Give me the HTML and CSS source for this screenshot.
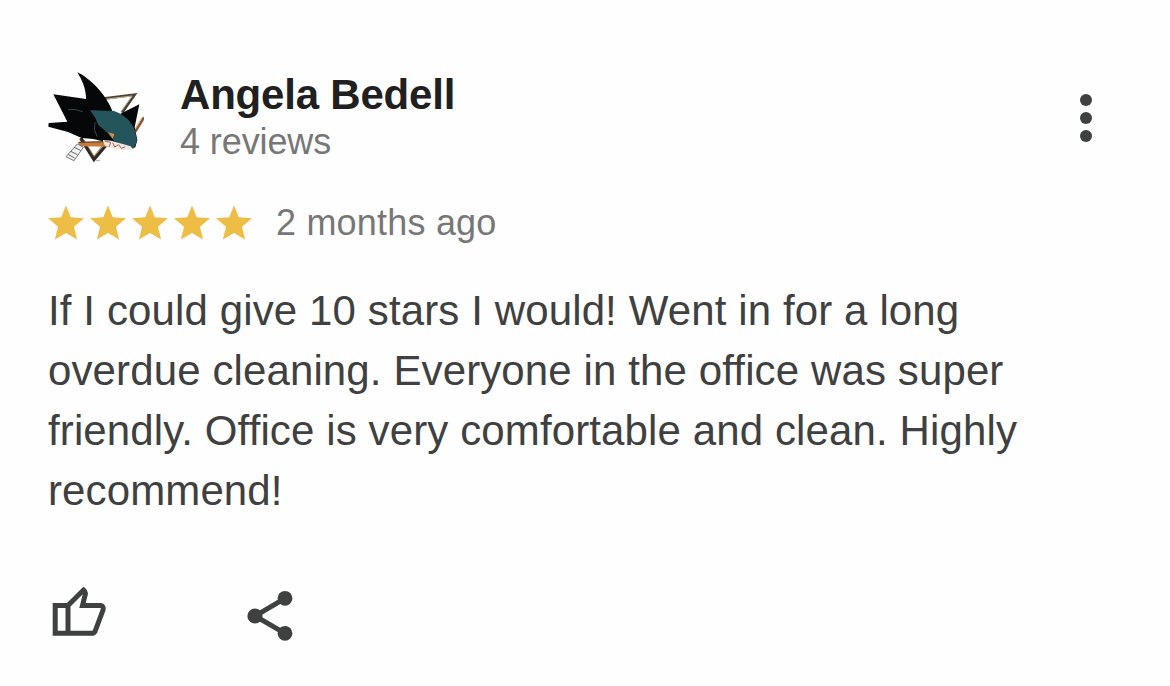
FILE: index.html
```html
<!DOCTYPE html>
<html lang="en">
<head>
    <meta charset="UTF-8">
    <meta name="viewport" content="width=device-width, initial-scale=1.0">
    <title>Review</title>
    <link rel="stylesheet" href="styles.css">
</head>
<body>
    <svg class="defs" width="0" height="0">
        <symbol id="star" viewBox="2 2 20 19">
            <path d="M12 17.27 18.18 21l-1.75-7.13L22 9.1l-7.35-.55L12 2 9.35 8.55 2 9.1l5.57 4.77L5.82 21z"/>
        </symbol>
    </svg>
    <div class="review">
        <div class="header">
            <svg class="avatar" viewBox="24 18 288 288">
                <!-- triangle behind the shark -->
                <path d="M190 104 284 92 246 146" fill="none" stroke="#4a4335" stroke-width="8"/>
                <path d="M200 105 276 96 243 142" fill="none" stroke="#c4b49c" stroke-width="3"/>
                <path d="M122 222 162 286 196 246" fill="none" stroke="#2b2a24" stroke-width="10"/>
                <path d="M132 228 162 277 186 246" fill="none" stroke="#a87a45" stroke-width="3"/>
                <path d="M312 160 286 203" stroke="#8b5a35" stroke-width="8"/>
                <path d="M308 158 284 196" stroke="#dfa878" stroke-width="3"/>
                <!-- stick -->
                <path d="M113 234 216 232 214 248 120 247z" fill="#c9793a"/>
                <path d="M116 235 210 233" stroke="#4d3524" stroke-width="3"/>
                <path d="M112 240 78 278 102 290 130 250z" fill="#f2f2f2" stroke="#777" stroke-width="3"/>
                <path d="M102 250l20 9M92 262l20 10M84 271l20 11" stroke="#666" stroke-width="3"/>
                <!-- body and fins -->
                <path d="M112 25C150 42 198 92 217 141L240 150 298 121 284 190 292 228 286 250 270 256 200 235 160 225 125 222 84 204 25 188 26 177 82 173 40 91 138 105C139 76 126 48 112 25z" fill="#050708"/>
                <path d="M150 139 222 141C252 151 276 174 284 199L292 231 280 254 258 246 222 230 200 205 182 200 166 162z" fill="#24545c"/>
                <path d="M168 178 196 200 200 226 180 228 165 211z" fill="#050708"/>
                <path d="M84 137Q104 133 128 143M165 175Q159 196 171 218" fill="none" stroke="#34454a" stroke-width="3"/>
                <path d="M205 205 223 210 218 224z" fill="#d99245"/>
                <path d="M188 228 214 230 272 247 279 256 252 259 220 254 194 244z" fill="#f0e9e4"/>
                <path d="M194 232 212 235 207 250M218 236 224 249 236 242 244 253 256 248" fill="none" stroke="#a7664c" stroke-width="3"/>
                <path d="M168 290h12" stroke="#aaa" stroke-width="3"/>
            </svg>
            <div class="author">
                <div class="name">Angela Bedell</div>
                <div class="count">4 reviews</div>
            </div>
            <svg class="menu" viewBox="0 0 24 60">
                <circle cx="12" cy="12" r="6"/>
                <circle cx="12" cy="30" r="6"/>
                <circle cx="12" cy="48" r="6"/>
            </svg>
        </div>
        <div class="rating">
            <svg class="star"><use href="#star"/></svg>
            <svg class="star"><use href="#star"/></svg>
            <svg class="star"><use href="#star"/></svg>
            <svg class="star"><use href="#star"/></svg>
            <svg class="star"><use href="#star"/></svg>
            <span class="time">2 months ago</span>
        </div>
        <p class="text">If I could give 10 stars I would! Went in for a long<br>overdue cleaning. Everyone in the office was super<br>friendly. Office is very comfortable and clean. Highly<br>recommend!</p>
        <div class="actions">
            <svg class="like" viewBox="0 0 56 56">
                <path d="M5.2 20.5H18L33.5 5Q36 7 35.3 9.5L32.5 20.5H50.5Q54 21 53 25L45 46.5Q44 48.3 42 48.3H5.2zM18 20.5V48.5"/>
            </svg>
            <svg class="share" viewBox="0 0 48 56">
                <path d="M39 13.3 9 31 39 48.3"/>
                <circle cx="39" cy="13.3" r="7.4"/>
                <circle cx="9" cy="31" r="7.6"/>
                <circle cx="39" cy="48.3" r="7.4"/>
            </svg>
        </div>
    </div>
</body>
</html>
```
FILE: styles.css
```css
* {
    margin: 0;
    padding: 0;
    box-sizing: border-box;
}

body {
    background: #fefefe;
    font-family: "Liberation Sans", Arial, sans-serif;
}

.defs {
    display: block;
}

.review {
    padding: 70px 72px 0 48px;
}

.header {
    display: flex;
    align-items: center;
    height: 96px;
}

.avatar {
    width: 96px;
    height: 96px;
    margin-right: 36px;
}

.author {
    flex: 1;
    padding-top: 2px;
}

.name {
    font-size: 42px;
    font-weight: bold;
    line-height: 46px;
    letter-spacing: -0.2px;
    color: #202020;
}

.count {
    font-size: 36px;
    line-height: 48px;
    letter-spacing: -0.1px;
    color: #767776;
}

.menu {
    width: 24px;
    height: 60px;
    fill: #3f4040;
}

.rating {
    display: flex;
    align-items: center;
    gap: 6px;
    height: 46px;
    margin-top: 34px;
}

.star {
    width: 36px;
    height: 35px;
    margin-bottom: 2px;
    fill: #edbd46;
    overflow: visible;
}

.time {
    margin-left: 18px;
    font-size: 36px;
    line-height: 46px;
    letter-spacing: 0.2px;
    color: #767776;
}

.text {
    margin-top: 35px;
    font-size: 42px;
    line-height: 60px;
    letter-spacing: 0.12px;
    white-space: nowrap;
    color: #3f4040;
}

.actions {
    display: flex;
    gap: 140px;
    margin-top: 64px;
    padding-left: 2px;
}

.like {
    width: 56px;
    height: 56px;
    fill: none;
    stroke: #3f4040;
    stroke-width: 5;
}

.share {
    width: 48px;
    height: 56px;
    fill: #3f4040;
}

.share path {
    fill: none;
    stroke: #3f4040;
    stroke-width: 5;
}
```
